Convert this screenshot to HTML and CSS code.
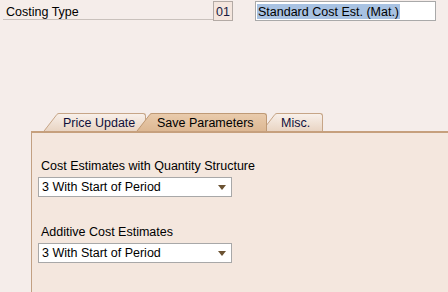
FILE: index.html
```html
<!DOCTYPE html>
<html lang="en">
<head>
  <meta charset="UTF-8" />
  <meta name="viewport" content="width=device-width, initial-scale=1.0" />
  <title>Costing Variant</title>
  <link rel="stylesheet" href="styles.css">
</head>
<body>
  <div class="header">
    <div class="field-label">Costing Type</div>
    <div class="key-box">01</div>
    <div class="desc-box"><span class="selected-text">Standard Cost Est. (Mat.)</span></div>
  </div>

  <div class="tabview">
    <div class="tabs">
      <div class="tab tab-first">
        <svg class="slant" width="16" height="19" viewBox="0 0 16 19">
          <defs>
            <linearGradient id="gOff" x1="0" y1="0" x2="0" y2="19" gradientUnits="userSpaceOnUse">
              <stop offset="0" stop-color="#f8f0ea"/>
              <stop offset="1" stop-color="#e8d3c1"/>
            </linearGradient>
          </defs>
          <path d="M0 19 L14 1 Q14.8 0 16 0 L16 19 Z" fill="url(#gOff)"/>
          <path d="M0.3 19 L14 1.3 Q14.8 0.5 16 0.5" fill="none" stroke="#c6a587"/>
        </svg>
        <div class="tab-body w-price">Price Update</div>
      </div>
      <div class="tab tab-active">
        <svg class="slant" width="16" height="19" viewBox="0 0 16 19">
          <defs>
            <linearGradient id="gOn" x1="0" y1="0" x2="0" y2="19" gradientUnits="userSpaceOnUse">
              <stop offset="0" stop-color="#e9cbac"/>
              <stop offset="1" stop-color="#dcb792"/>
            </linearGradient>
          </defs>
          <path d="M0 19 L14 1 Q14.8 0 16 0 L16 19 Z" fill="url(#gOn)"/>
          <path d="M0.3 19 L14 1.3 Q14.8 0.5 16 0.5" fill="none" stroke="#bf9a76"/>
        </svg>
        <div class="tab-body w-save">Save Parameters</div>
      </div>
      <div class="tab tab-last">
        <svg class="slant" width="16" height="19" viewBox="0 0 16 19">
          <path d="M0 19 L14 1 Q14.8 0 16 0 L16 19 Z" fill="url(#gOff)"/>
          <path d="M0.3 19 L14 1.3 Q14.8 0.5 16 0.5" fill="none" stroke="#c6a587"/>
        </svg>
        <div class="tab-body w-misc">Misc.</div>
      </div>
    </div>

    <div class="panel">
      <div class="group">
        <div class="label">Cost Estimates with Quantity Structure</div>
        <div class="dropdown">
          <span>3 With Start of Period</span>
          <span class="arrow"></span>
        </div>
      </div>
      <div class="group">
        <div class="label">Additive Cost Estimates</div>
        <div class="dropdown">
          <span>3 With Start of Period</span>
          <span class="arrow"></span>
        </div>
      </div>
    </div>
  </div>
</body>
</html>
```

FILE: styles.css
```css
html {
  overflow: hidden;
}
body {
  margin: 0;
  background-color: #f5edea;
  font-family: "Liberation Sans", Arial, sans-serif;
  font-size: 12.5px;
  color: #000;
  height: 292px;
  overflow: hidden;
}
.header {
  display: flex;
  align-items: flex-start;
  padding-top: 1px;
}
.field-label {
  margin-left: 3px;
  width: 207px;
  height: 14px;
  line-height: 14px;
  padding: 5px 0 0 3px;
  border-bottom: 1px solid #c9c1bc;
  margin-top: -1px;
}
.key-box {
  width: 18px;
  height: 18px;
  line-height: 20px;
  text-align: center;
  background: #f4e6de;
  border: 1px solid #b3aaa5;
  color: #1a1a40;
}
.desc-box {
  margin-left: 22px;
  width: 181px;
  height: 20px;
  box-sizing: border-box;
  background: #fff;
  border: 1px solid #a9a9a9;
  padding: 1px 0 0 1px;
}
.selected-text {
  display: inline-block;
  background: #a8c2e2;
  height: 15px;
  line-height: 16px;
  padding: 0 1px;
  margin-top: 1px;
}
.tabview {
  margin-top: 92px;
  margin-left: 31px;
}
.tabs {
  display: flex;
  padding-left: 12px;
  height: 18px;
}
.tab {
  display: flex;
  height: 19px;
  position: relative;
}
.tab-active {
  z-index: 2;
  margin-left: -10px;
}
.tab-last {
  margin-left: -6px;
}
.slant {
  display: block;
  flex: none;
}
.tab-body {
  height: 18px;
  line-height: 19px;
  padding-left: 4px;
  border-top: 1px solid #c6a587;
  border-right: 1px solid #c6a587;
  border-top-right-radius: 3px;
  background: linear-gradient(#f8f0ea, #e8d3c1);
  color: #10103a;
}
.tab-active .tab-body {
  background: linear-gradient(#e9cbac, #dcb792);
  border-color: #bf9a76;
  color: #000;
  padding-left: 5px;
}
.w-price { width: 82px; }
.w-save { width: 109px; }
.w-misc { width: 41px; }
.panel {
  position: relative;
  z-index: 3;
  background: #f4e7de;
  border-top: 2px solid #c6a07d;
  border-left: 1px solid #c2a082;
  height: 133px;
  padding-top: 26px;
}
.group {
  margin-bottom: 28px;
}
.label {
  padding-left: 9px;
  line-height: 14px;
  white-space: nowrap;
}
.dropdown {
  margin: 4px 0 0 6px;
  width: 194px;
  height: 20px;
  box-sizing: border-box;
  background: #fff;
  border: 1px solid #a8a8a8;
  display: flex;
  align-items: center;
  justify-content: space-between;
  padding: 0 5px 0 3px;
}
.arrow {
  width: 0;
  height: 0;
  border-left: 4px solid transparent;
  border-right: 4px solid transparent;
  border-top: 5px solid #6b5232;
}
```
